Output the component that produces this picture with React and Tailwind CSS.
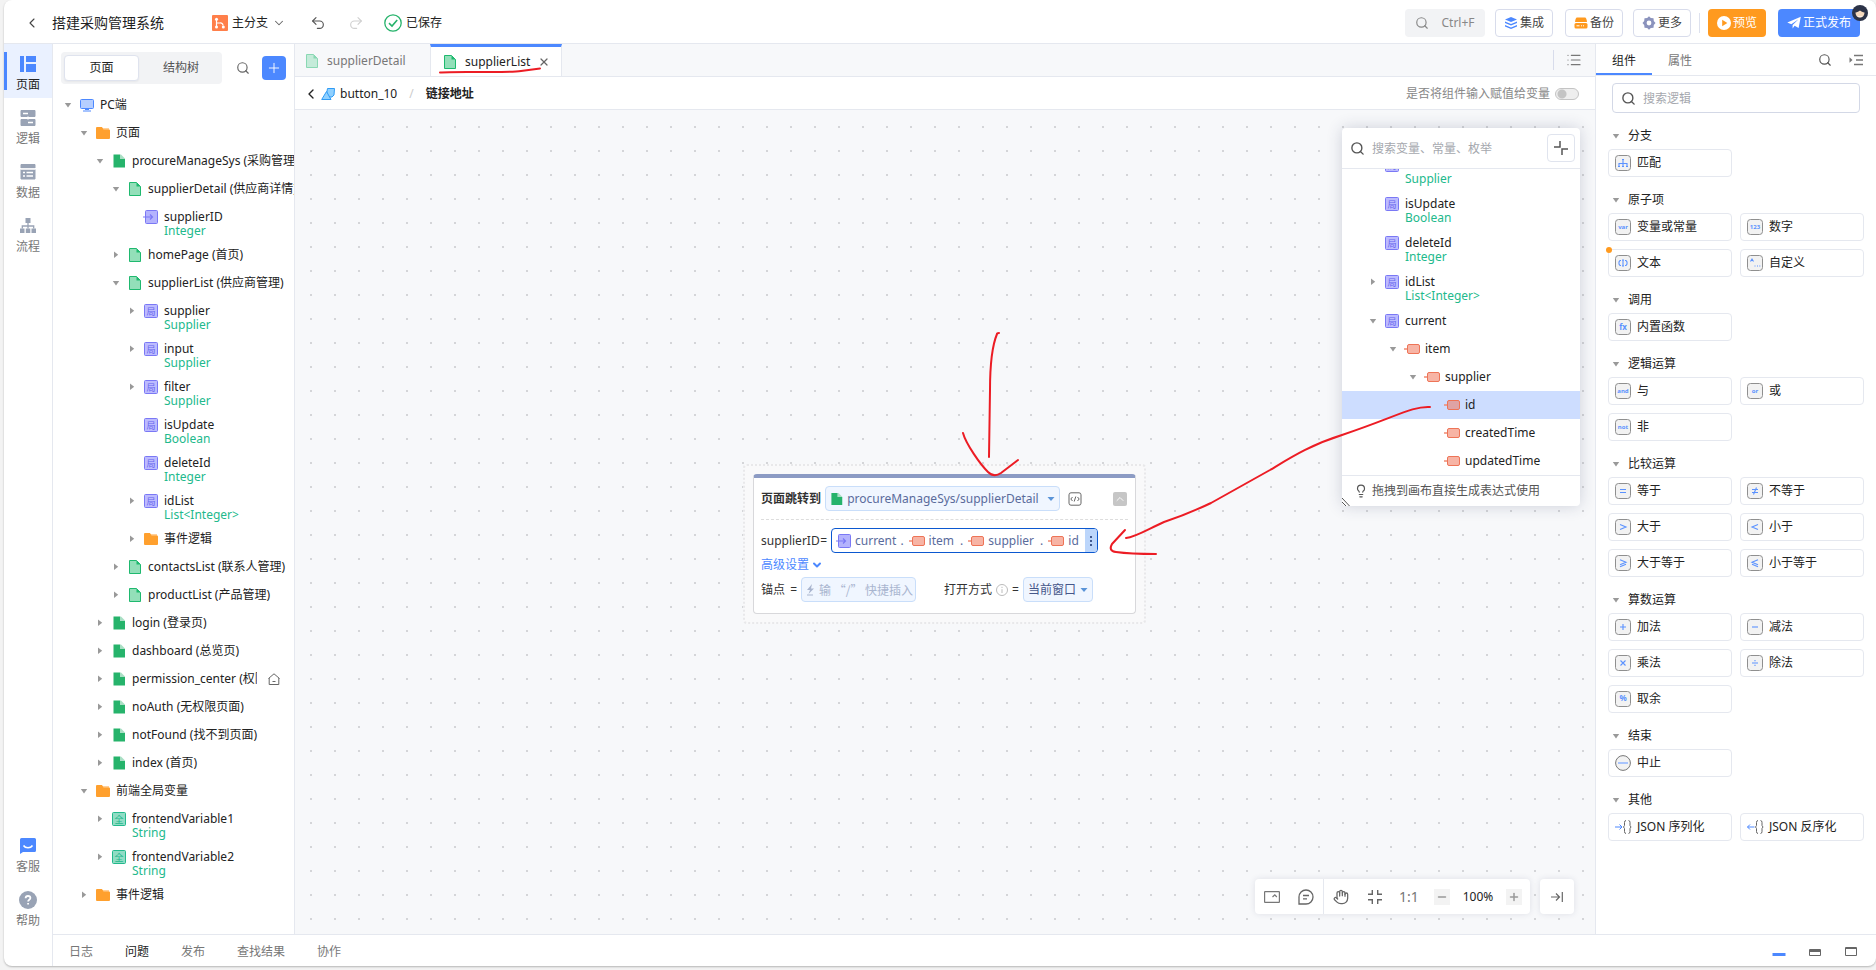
import clsx from 'clsx';
import { Search, Undo2, Redo2, ChevronDown, ChevronLeft, ChevronUp, Hand, Lightbulb, List, Plus, Minus, X } from 'lucide-react';

const TREE = [
  { level: 0, open: true, icon: 'pc', name: 'PC端' },
  { level: 1, open: true, icon: 'folder', name: '页面' },
  { level: 2, open: true, icon: 'page', name: 'procureManageSys (采购管理系统)' },
  { level: 3, open: true, icon: 'view', name: 'supplierDetail (供应商详情)' },
  { level: 4, icon: 'param', name: 'supplierID', type: 'Integer' },
  { level: 3, open: false, icon: 'view', name: 'homePage (首页)' },
  { level: 3, open: true, icon: 'view', name: 'supplierList (供应商管理)' },
  { level: 4, open: false, icon: 'local', name: 'supplier', type: 'Supplier' },
  { level: 4, open: false, icon: 'local', name: 'input', type: 'Supplier' },
  { level: 4, open: false, icon: 'local', name: 'filter', type: 'Supplier' },
  { level: 4, icon: 'local', name: 'isUpdate', type: 'Boolean' },
  { level: 4, icon: 'local', name: 'deleteId', type: 'Integer' },
  { level: 4, open: false, icon: 'local', name: 'idList', type: 'List<Integer>' },
  { level: 4, open: false, icon: 'folder', name: '事件逻辑' },
  { level: 3, open: false, icon: 'view', name: 'contactsList (联系人管理)' },
  { level: 3, open: false, icon: 'view', name: 'productList (产品管理)' },
  { level: 2, open: false, icon: 'page', name: 'login (登录页)' },
  { level: 2, open: false, icon: 'page', name: 'dashboard (总览页)' },
  { level: 2, open: false, icon: 'page', name: 'permission_center (权限中心)', home: true },
  { level: 2, open: false, icon: 'page', name: 'noAuth (无权限页面)' },
  { level: 2, open: false, icon: 'page', name: 'notFound (找不到页面)' },
  { level: 2, open: false, icon: 'page', name: 'index (首页)' },
  { level: 1, open: true, icon: 'folder', name: '前端全局变量' },
  { level: 2, open: false, icon: 'global', name: 'frontendVariable1', type: 'String' },
  { level: 2, open: false, icon: 'global', name: 'frontendVariable2', type: 'String' },
  { level: 1, open: false, icon: 'folder', name: '事件逻辑' },
];

const VARIABLES = [
  { level: 0, open: false, icon: 'local', name: 'filter', type: 'Supplier' },
  { level: 0, icon: 'local', name: 'isUpdate', type: 'Boolean' },
  { level: 0, icon: 'local', name: 'deleteId', type: 'Integer' },
  { level: 0, open: false, icon: 'local', name: 'idList', type: 'List<Integer>' },
  { level: 0, open: true, icon: 'local', name: 'current' },
  { level: 1, open: true, icon: 'field', name: 'item' },
  { level: 2, open: true, icon: 'field', name: 'supplier' },
  { level: 3, icon: 'field', name: 'id', selected: true },
  { level: 3, icon: 'field', name: 'createdTime' },
  { level: 3, icon: 'field', name: 'updatedTime' },
];

const SECTIONS = [
  { title: '分支', items: [{ glyph: 'tree', label: '匹配' }] },
  {
    title: '原子项',
    items: [
      { glyph: 'var', label: '变量或常量' },
      { glyph: '123', label: '数字' },
      { glyph: 'text', label: '文本', dot: true },
      { glyph: 'custom', label: '自定义' },
    ],
  },
  { title: '调用', items: [{ glyph: 'fx', label: '内置函数' }] },
  {
    title: '逻辑运算',
    items: [
      { glyph: 'and', label: '与' },
      { glyph: 'or', label: '或' },
      { glyph: 'not', label: '非' },
    ],
  },
  {
    title: '比较运算',
    items: [
      { glyph: '=', label: '等于' },
      { glyph: '≠', label: '不等于' },
      { glyph: '>', label: '大于' },
      { glyph: '<', label: '小于' },
      { glyph: '≥', label: '大于等于' },
      { glyph: '≤', label: '小于等于' },
    ],
  },
  {
    title: '算数运算',
    items: [
      { glyph: '+', label: '加法' },
      { glyph: '−', label: '减法' },
      { glyph: '×', label: '乘法' },
      { glyph: '÷', label: '除法' },
      { glyph: '%', label: '取余' },
    ],
  },
  { title: '结束', items: [{ glyph: 'stop', label: '中止' }] },
  {
    title: '其他',
    items: [
      { glyph: 'encode', label: 'JSON 序列化' },
      { glyph: 'decode', label: 'JSON 反序化' },
    ],
  },
];

export default function App() {
  return (
    <div className="h-screen min-h-[720px] bg-[#f3f3f3] pl-1 pb-1 font-['Noto_Sans','Noto_Sans_CJK_SC',sans-serif] text-xs text-[#222]">
      <div className="flex h-full flex-col overflow-hidden rounded-lg bg-white shadow-[0_1px_2px_rgba(0,0,0,0.25)]">
        <Header />
        <div className="flex min-h-0 flex-1">
          <Rail />
          <div className="flex min-w-0 flex-1 flex-col">
            <div className="flex min-h-0 flex-1">
              <Sidebar />
              <Editor />
              <ComponentPanel />
            </div>
            <Footer />
          </div>
        </div>
      </div>
    </div>
  );
}

function Header() {
  return (
    <header className="flex h-11 shrink-0 items-center border-b border-[#e5e8ef] pt-0.5 pr-4 pl-5">
      <button aria-label="返回" className="mr-3 text-[#444]">
        <ChevronLeft className="h-4 w-4" strokeWidth={1.6} />
      </button>
      <h1 className="mr-12 text-sm">搭建采购管理系统</h1>
      <button className="flex items-center gap-1">
        <svg className="h-4 w-4" viewBox="0 0 16 16" fill="none">
          <rect width="16" height="16" rx="1" fill="#ff7f4a" />
          <path d="M4.5 5v7M4.5 8H8a2.5 2.5 0 0 1 3 2.5" stroke="#fff" strokeWidth="1.2" />
          <circle cx="4.5" cy="4.2" r="1.5" fill="#fff" />
          <circle cx="4.5" cy="12" r="1.5" fill="#fff" />
          <circle cx="11.3" cy="12" r="1.5" fill="#fff" />
        </svg>
        主分支
        <ChevronDown className="h-3.5 w-3.5 text-[#666]" strokeWidth={1.8} />
      </button>
      <button aria-label="撤销" className="ml-6 text-[#555]">
        <Undo2 className="h-4 w-4" strokeWidth={1.7} />
      </button>
      <button aria-label="重做" className="ml-[22px] text-[#d0d0d0]">
        <Redo2 className="h-4 w-4" strokeWidth={1.7} />
      </button>
      <div className="ml-5 flex items-center gap-1">
        <svg className="h-[18px] w-[18px]" viewBox="0 0 18 18" fill="none" stroke="#26b36b" strokeWidth="1.3">
          <circle cx="9" cy="9" r="8.2" />
          <path d="M5 9.2 8 12l5.2-6" strokeWidth="1.6" />
        </svg>
        已保存
      </div>

      <div className="ml-auto flex h-7 items-center text-[#444]">
        <button className="flex h-7 w-20 items-center justify-center gap-3 rounded bg-[#f2f3f5] text-[#888]">
          <Search className="h-3.5 w-3.5" strokeWidth={2} />
          Ctrl+F
        </button>
        <button className="ml-2.5 flex h-7 w-[58px] items-center justify-center gap-0.5 rounded border border-[#d8dceb]">
          <svg className="h-3.5 w-3.5" viewBox="0 0 14 14" fill="#4c88ff">
            <path d="M7 1 13 3.5 7 6 1 3.5z" />
            <path d="M1 5.5 7 8l6-2.5v1.6L7 9.6 1 7.1zM1 9l6 2.5L13 9v1.6L7 13.1l-6-2.5z" />
          </svg>
          集成
        </button>
        <button className="ml-3 flex h-7 w-[58px] items-center justify-center gap-0.5 rounded border border-[#d8dceb]">
          <svg className="h-3.5 w-3.5" viewBox="0 0 14 14" fill="#ff9a1f">
            <path d="M3 1.5h8q1.500 0 2 4.500H1q.5-4.500 2-4.500z" />
            <rect x="0.5" y="7" width="13" height="5.5" rx="1.5" />
            <path d="M2.5 9.8h3M7 9.8h1M9 9.8h1" stroke="#fff" />
          </svg>
          备份
        </button>
        <button className="ml-2.5 flex h-7 w-[58px] items-center justify-center gap-0.5 rounded border border-[#d8dceb]">
          <svg className="h-3.5 w-3.5" viewBox="0 0 14 14">
            <path d="M7 .3 8.8 2l2.700.200.3 2.700L13.500 7l-1.700 2.100-.3 2.700-2.700.2L7 13.700 5.200 12l-2.700-.2-.3-2.700L.5 7l1.700-2.100.3-2.700L5.200 2z" fill="#8b93bd" />
            <circle cx="7" cy="7" r="2.4" fill="#fff" />
          </svg>
          更多
        </button>
        <span className="mx-2 h-5 w-px bg-[#dde1ee]" />
        <button className="flex h-7 w-[58px] items-center justify-center gap-0.5 rounded bg-[#ff9a1f] text-white">
          <svg className="h-3.5 w-3.5" viewBox="0 0 14 14">
            <circle cx="7" cy="7" r="7" fill="#fff" />
            <path d="M5.2 3.8 10.3 7l-5.1 3.2z" fill="#ff9a1f" />
          </svg>
          预览
        </button>
        <button className="relative ml-3 flex h-7 w-[82px] items-center justify-center gap-0.5 rounded bg-[#4c88ff] text-white">
          <svg className="h-3.5 w-3.5" viewBox="0 0 14 14" fill="#fff">
            <path d="M13.8.8 11.600 12 7.6 9.8 5.6 12.6V8.900L11.5 3.300 4.300 8.200.3 6.600z" />
          </svg>
          正式发布
          <svg className="absolute -top-1 -right-2 h-4 w-4" viewBox="0 0 16 16">
            <circle cx="8" cy="8" r="8" fill="#2c3348" />
            <path d="M3.500 7.500c2-.2 3-1 4.500-2 1.500 1 2.500 1.800 4.500 2 0 3-2 5-4.500 5s-4.500-2-4.500-5z" fill="#f5d9bd" />
            <path d="M5 10.800c1.500.9 4.500.9 6 0-.8 1.800-5.200 1.800-6 0z" fill="#fff" />
          </svg>
        </button>
      </div>
    </header>
  );
}

function Rail() {
  return (
    <nav className="flex w-[49px] shrink-0 flex-col border-r border-[#e5e8ef] pb-8">
      <RailItem label="页面" active>
        <path d="M0 0h4v16H0zM6 0h10v6H6zM6 8h10v8H6z" fill="#4c88ff" />
      </RailItem>
      <RailItem label="逻辑">
        <path d="M1 .5h14v6H1zM1 9.5h14v6H1z" fill="#99a3b5" stroke="#99a3b5" strokeLinejoin="round" />
        <path d="M3 3.5h5M8 12.5h5M8 6.5v3" stroke="#fff" strokeWidth="1.3" />
      </RailItem>
      <RailItem label="数据">
        <path d="M1 .5h14V4H1zM1 5.5h14V15H1z" fill="#99a3b5" stroke="#99a3b5" strokeLinejoin="round" />
        <path d="M1 5h14M3 8.5h2M6.5 8.5H13M3 12h2M6.5 12H13" stroke="#fff" strokeWidth="1.3" />
      </RailItem>
      <RailItem label="流程">
        <path d="M5.5 0h5v5h-5zM0 10.5h4.5V15H0zM5.8 10.5h4.5V15H5.8zM11.5 10.5H16V15h-4.5z" fill="#99a3b5" />
        <path d="M8 5v5.5M2.3 10.5V8h11.4v2.5" stroke="#99a3b5" strokeWidth="1.3" fill="none" />
      </RailItem>
      <div className="mt-auto">
        <RailItem label="客服">
          <path d="M1.5 0h13A1.5 1.5 0 0 1 16 1.5v11a1.5 1.5 0 0 1-1.5 1.5H3l-3 2V1.5A1.5 1.5 0 0 1 1.5 0z" fill="#4c88ff" />
          <path d="M3.5 7.5c2 3 7 3 9 0" stroke="#fff" strokeWidth="1.6" fill="none" />
        </RailItem>
        <RailItem label="帮助">
          <circle cx="8" cy="8" r="9" fill="#99a3b5" />
          <path d="M5.6 6.300A2.400 2.400 0 0 1 8 4c1.400 0 2.400.9 2.400 2.100 0 1.700-2.300 1.700-2.300 3.400M8.100 10.900v1.700" stroke="#fff" strokeWidth="1.8" fill="none" />
        </RailItem>
      </div>
    </nav>
  );
}

function RailItem({ label, active, children }) {
  return (
    <button
      className={clsx(
        'relative flex h-[54px] w-full flex-col items-center gap-[5px] pt-3 leading-4',
        active ? 'bg-[#eaf1ff] text-[#222]' : 'text-[#777]'
      )}
    >
      {active && <span className="absolute top-2 left-0 h-[38px] w-[3px] bg-[#4c88ff]" />}
      <svg className="h-4 w-4 overflow-visible" viewBox="0 0 16 16">
        {children}
      </svg>
      {label}
    </button>
  );
}

function Sidebar() {
  return (
    <aside className="flex w-[242px] shrink-0 flex-col overflow-hidden border-r border-[#e5e8ef]">
      <div className="flex items-center px-2 pt-2">
        <div className="flex h-8 w-[161px] items-center rounded bg-[#f2f3f5] px-[3px]">
          <button className="h-[26px] w-[75px] rounded border border-[#dfe3ee] bg-white shadow-xs">页面</button>
          <button className="flex-1 pl-1 text-[#555]">结构树</button>
        </div>
        <button aria-label="搜索" className="ml-[14px] text-[#666]">
          <Search className="h-3.5 w-3.5" strokeWidth={2} />
        </button>
        <button aria-label="新增" className="ml-3 flex h-6 w-6 items-center justify-center rounded bg-[#4c88ff] text-white">
          <Plus className="h-4 w-4" strokeWidth={1.4} />
        </button>
      </div>
      <ul className="mt-[7px] flex-1 overflow-hidden pl-2.5">
        {TREE.map((node, i) => (
          <TreeRow key={i} node={node} step={16} className={node.type ? 'h-[38px]' : 'h-7'} />
        ))}
      </ul>
    </aside>
  );
}

function TreeRow({ node, step, className }) {
  return (
    <li
      className={clsx('flex items-start whitespace-nowrap', node.selected && 'bg-[#cdddff]', className)}
      style={{ paddingLeft: node.level * step }}
    >
      <span className="flex h-7 w-[17px] shrink-0 items-center pl-px">
        {node.open !== undefined && <Caret open={node.open} />}
      </span>
      <span className="flex h-7 w-5 shrink-0 items-center">
        <NodeIcon kind={node.icon} />
      </span>
      <span className={clsx('pt-[7px] leading-[14px]', node.home && 'w-[125px] shrink-0 overflow-hidden')}>
        {node.name}
        {node.type && <span className="block text-[#22b98c]">{node.type}</span>}
      </span>
      {node.home && (
        <button aria-label="首页" className="ml-[11px] flex h-7 shrink-0 items-center gap-3.5">
          <svg className="h-3 w-3" viewBox="0 0 12 12" fill="none" stroke="#666">
            <path d="M.5 5.500 6 .8l5.500 4.700M1.200 5v6.500h9.600V5M4.500 8.500h3" />
          </svg>
          <svg className="h-3 w-1" viewBox="0 0 4 12" fill="#555">
            <path d="M0 2h2v2H0zM0 5h2v2H0zM0 8h2v2H0z" />
          </svg>
        </button>
      )}
    </li>
  );
}

function Caret({ open }) {
  return (
    <svg className="h-2 w-2" viewBox="0 0 8 8" fill="#999">
      {open ? <path d="M.8 2h6.400L4 6.500z" /> : <path d="M2 .5V7l4.200-3.200z" />}
    </svg>
  );
}

function NodeIcon({ kind }) {
  if (kind === 'pc') {
    return (
      <svg className="h-3.5 w-3.5" viewBox="0 0 14 14" stroke="#4c88ff">
        <rect x="0.5" y="1.5" width="13" height="9" rx="1" fill="#b5ceff" />
        <path d="M3 13h8M5 11.5h4" />
      </svg>
    );
  }
  if (kind === 'folder') {
    return (
      <svg className="h-3.5 w-3.5" viewBox="0 0 14 14">
        <path d="M6 2h7v4H6z" fill="#ffd09a" />
        <path d="M1 1h5l1.500 2.500H13a1 1 0 0 1 1 1V12a1 1 0 0 1-1 1H1a1 1 0 0 1-1-1V2a1 1 0 0 1 1-1z" fill="#ffa02e" />
      </svg>
    );
  }
  if (kind === 'page') {
    return (
      <svg className="h-3.5 w-3.5" viewBox="0 0 14 14">
        <path d="M8 .5h1l4 4v1H8z" fill="#a9dfc4" />
        <path d="M1.500.5H8V5h5v8.500H1.500z" fill="#26b36b" />
      </svg>
    );
  }
  if (kind === 'view') {
    return (
      <svg className="h-3.5 w-3.5" viewBox="0 0 14 14">
        <path d="M1.500.5h7l4 4v9h-11z" fill="#93dfb9" stroke="#1fb96f" />
        <path d="M8.500.5v4h4z" fill="#1fb96f" />
      </svg>
    );
  }
  if (kind === 'param') {
    return (
      <svg className="h-3.5 w-3.5 overflow-visible" viewBox="0 0 14 14" fill="none" stroke="#7a78f5">
        <rect x="1.5" y="0.5" width="12" height="13" rx="1" fill="#b4b3fd" />
        <path d="M-1 7h9M6 4.500 8.500 7 6 9.500" strokeWidth="1.2" />
      </svg>
    );
  }
  if (kind === 'field') {
    return (
      <svg className="h-3.5 w-4 -ml-px" viewBox="0 0 16 14">
        <path d="M0 7h4" stroke="#f08a70" strokeWidth="1.5" />
        <rect x="3.5" y="2.5" width="12" height="9" rx="1.5" fill="#ef6a4b" fillOpacity="0.5" stroke="#ee7457" />
      </svg>
    );
  }
  const global = kind === 'global';
  return (
    <svg className="h-3.5 w-3.5" viewBox="0 0 14 14">
      <rect x="0.5" y="0.5" width="13" height="13" rx="1" fill={global ? '#90dcc4' : '#bcbbfe'} stroke={global ? '#22b98c' : '#7a78f5'} />
      <text x="7" y="10.500" fontSize="9" textAnchor="middle" fill={global ? '#22b98c' : '#6664ee'}>
        {global ? '全' : '局'}
      </text>
    </svg>
  );
}

function Editor() {
  return (
    <main className="flex min-w-0 flex-1 flex-col">
      <div className="flex h-[33px] shrink-0 border-b border-[#e5e8ef] bg-[#f7f8fa]">
        <button className="flex w-[135px] items-center gap-2 pt-0.5 pl-[10px] text-[#777]">
          <span className="opacity-50">
            <NodeIcon kind="view" />
          </span>
          supplierDetail
        </button>
        <div className="relative flex w-[132px] items-center border-x border-t-[3px] border-x-[#e5e8ef] border-t-[#4c88ff] bg-white pl-3">
          <button className="flex items-center gap-2">
            <NodeIcon kind="view" />
            supplierList
          </button>
          <button aria-label="关闭" className="ml-2 text-[#666]">
            <X className="h-3 w-3" strokeWidth={2.5} />
          </button>
          <svg className="absolute top-5 left-2 h-2 w-[104px]" viewBox="0 0 104 8" fill="none" stroke="#ec1c24" strokeWidth="2" strokeLinecap="round">
            <path d="M1 5.500C10 4.500 40 5 52 5 70 5 76 5 82 4L101 1.500" />
          </svg>
        </div>
        <div className="my-1.5 mr-[13px] ml-auto flex items-center border-l border-[#d8dceb] pl-3 text-[#777]">
          <button aria-label="标签列表">
            <List className="h-4 w-4" strokeWidth={1.8} />
          </button>
        </div>
      </div>

      <div className="flex h-[33px] shrink-0 items-center border-b border-[#e5e8ef] pt-0.5 pr-4 pl-2">
        <button aria-label="返回上级">
          <ChevronLeft className="h-4 w-4" strokeWidth={2} />
        </button>
        <a href="#button_10" className="ml-0.5 flex items-center gap-[5px]">
          <svg className="h-3.5 w-3.5" viewBox="0 0 14 14" stroke="#2f9bf5" strokeLinejoin="round">
            <path d="M6.500 1.500h7L13 8l-2 2H5z" fill="#8fd0ff" />
            <path d="M5.500 4.500 10 12.500H.7z" fill="#8fd0ff" />
          </svg>
          button_10
        </a>
        <span className="mx-3 text-[#ccc]">/</span>
        <span className="font-bold">链接地址</span>
        <label className="ml-auto flex items-center gap-[5px] text-[#888]">
          是否将组件输入赋值给变量
          <input
            type="checkbox"
            role="switch"
            className="h-3 w-6 appearance-none rounded-full border border-[#c4c4c4] bg-[#eee] bg-[radial-gradient(circle_at_6px_5px,#c4c4c4_4px,transparent_5px)]"
          />
        </label>
      </div>

      <div className="relative flex-1 overflow-hidden bg-[#f7f8fa] bg-[linear-gradient(90deg,transparent_2px,#f7f8fa_2px),linear-gradient(#d4d5d8_2px,transparent_2px)] bg-size-[24px_24px] bg-position-[15px_16px]">
        <JumpCard />
        <VariablePanel />
        <CanvasToolbar />
        {/* hand-drawn arrows */}
        <svg className="pointer-events-none absolute top-0 left-0 h-[480px] w-[1200px]" viewBox="295 110 1200 480" fill="none" stroke="#ec1c24" strokeWidth="2" strokeLinecap="round" strokeLinejoin="round">
          <path d="M999 333q-2 0-2 1C992 346 990 366 990 390L989 457" />
          <path d="M963 433C966 444 980 464 988 472Q994 478 1001 473L1018 460" />
          <path d="M1430 407C1412 406 1396 417 1342 435 1310 445 1290 458 1270 470L1211 503C1190 513 1176 518 1164 522 1150 528 1136 537 1126 538" />
          <path d="M1125 530 1112 544Q1108 551 1116 552C1130 554 1142 554 1156 554" />
        </svg>
      </div>
    </main>
  );
}

function JumpCard() {
  return (
    <section className="absolute top-[354px] left-[448px] rounded border-2 border-dotted border-[#e8e8ea] bg-[#f9f9fa] p-2">
      <div className="h-[140px] w-[383px] rounded border border-t-4 border-[#d8d8db] border-t-[#8c9bc4] bg-white px-[7px] text-[#333]">
        <div className="flex h-[42px] items-center border-b border-dashed border-[#ddd]">
          <label htmlFor="target" className="mr-1 font-bold">
            页面跳转到
          </label>
          <div className="relative flex h-[25px] w-[235px] items-center rounded border border-[#c9defa] bg-[#f0f6ff] pl-1">
            <NodeIcon kind="page" />
            <select id="target" className="h-full w-full appearance-none pl-1 text-[#5a6b9c]">
              <option>procureManageSys/supplierDetail</option>
            </select>
            <SelectArrow />
          </div>
          <button aria-label="查看代码" className="ml-2">
            <svg className="h-3.5 w-3.5" viewBox="0 0 14 14" fill="none" stroke="#666">
              <rect x="1" y="0.8" width="12" height="12.4" rx="2" />
              <path d="M4.500 5 2.800 7l1.700 2M9.500 5l1.700 2-1.700 2M7.800 4.500l-1.600 5" />
            </svg>
          </button>
          <button aria-label="收起" className="mr-px ml-auto flex h-3.5 w-3.5 items-center justify-center rounded-xs bg-[#c6c6c6] text-white">
            <ChevronUp className="h-3 w-3" strokeWidth={1.8} />
          </button>
        </div>

        <div className="mt-2 flex h-[25px] items-center">
          <span className="mr-1 flex w-[66px] shrink-0 justify-between">
            supplierID <span>=</span>
          </span>
          <div className="flex h-[25px] w-[267px] items-center overflow-hidden rounded border border-[#0b58d0] text-[#5a6b9c]">
            <span className="ml-[5px] flex items-center gap-1">
              <NodeIcon kind="param" />
              current
            </span>
            <span className="ml-1">.</span>
            <FieldChip name="item" />
            <span className="ml-1.5">.</span>
            <FieldChip name="supplier" />
            <span className="ml-1.5">.</span>
            <FieldChip name="id" />
            <button aria-label="更多操作" className="ml-auto flex h-full w-3 items-center justify-center bg-[#bcd6fb]">
              <svg className="h-3 w-1" viewBox="0 0 4 12" fill="#41598f">
                <path d="M1 1h2v2H1zM1 5h2v2H1zM1 9h2v2H1z" />
              </svg>
            </button>
          </div>
        </div>

        <button className="mt-[3px] flex h-[18px] items-center gap-0.5 text-[#4c88ff]">
          高级设置
          <ChevronDown className="h-3 w-3" strokeWidth={4} />
        </button>

        <div className="mt-[3px] flex h-[25px] items-center">
          <label htmlFor="anchor" className="mr-1 flex w-9 justify-between whitespace-nowrap">
            锚点 <span>=</span>
          </label>
          <div className="flex h-[25px] w-[115px] items-center gap-0.5 rounded border border-[#c9defa] bg-[#f0f6ff] pl-[3px]">
            <svg className="h-3 w-3 shrink-0" viewBox="0 0 12 12" fill="#a9b5cf">
              <path d="M7 0 2 6h3L3.500 10 9 4.500H6zM2 10.500h6v1H2z" />
            </svg>
            <input
              id="anchor"
              placeholder="输 “/” 快捷插入"
              className="w-full min-w-0 font-['Noto_Sans_CJK_SC',sans-serif] placeholder-[#a9b5cf] outline-none"
            />
          </div>
          <label htmlFor="open-mode" className="ml-7 flex items-center gap-1">
            打开方式
            <svg className="h-3 w-3" viewBox="0 0 12 12" fill="none" stroke="#bbb">
              <circle cx="6" cy="6" r="5.5" />
              <path d="M6 2.800v1.200M6 5.200V9" />
            </svg>
            =
          </label>
          <div className="relative ml-1 h-[25px] w-[70px] rounded border border-[#c9defa] bg-[#f0f6ff]">
            <select id="open-mode" className="h-full w-full appearance-none pl-1 text-[#46578a]">
              <option>当前窗口</option>
            </select>
            <SelectArrow />
          </div>
        </div>
      </div>
    </section>
  );
}

function FieldChip({ name }) {
  return (
    <span className="ml-1.5 flex items-center gap-1">
      <NodeIcon kind="field" />
      {name}
    </span>
  );
}

function SelectArrow() {
  return (
    <svg className="pointer-events-none absolute top-2 right-1 h-2 w-2" viewBox="0 0 8 8" fill="#5a94d8">
      <path d="M.5 2h7L4 6z" />
    </svg>
  );
}

function VariablePanel() {
  return (
    <section className="absolute top-[18px] right-[15px] w-[238px] rounded bg-white shadow-[0_0_16px_rgba(40,50,90,0.2)]">
      <div className="flex h-[41px] items-center border-b border-[#e5e8ef] pr-[5px] pl-2">
        <Search className="h-[15px] w-[15px] shrink-0 text-[#555]" strokeWidth={2.2} />
        <input aria-label="搜索变量" placeholder="搜索变量、常量、枚举" className="w-full min-w-0 pt-0.5 pl-[7px] placeholder-[#a5a8ae] outline-none" />
        <button aria-label="收缩" className="flex h-7 w-7 shrink-0 items-center justify-center rounded border border-[#e0e4ee]">
          <svg className="h-3.5 w-3.5" viewBox="0 0 14 14" fill="none" stroke="#555" strokeWidth="1.5">
            <path d="M0 6h6V0M14 8H8v6" />
          </svg>
        </button>
      </div>
      <ul className="flex h-[306px] flex-col justify-end overflow-hidden">
        {VARIABLES.map((node, i) => (
          <TreeRow key={i} node={{ ...node, level: node.level + 1.3 }} step={20} className={node.type ? 'h-[39px] shrink-0' : 'h-7 shrink-0'} />
        ))}
      </ul>
      <div className="flex h-[31px] items-center gap-1 border-t border-[#e5e8ef] pl-3 text-[#555]">
        <Lightbulb className="h-3.5 w-3.5" strokeWidth={2} />
        拖拽到画布直接生成表达式使用
      </div>
      <svg className="absolute bottom-0 left-0 h-2 w-2" viewBox="0 0 8 8" stroke="#555" fill="none">
        <path d="M0 0l7.500 8M0 4l4 4" />
      </svg>
    </section>
  );
}

function CanvasToolbar() {
  return (
    <div className="absolute right-[21px] bottom-5 flex gap-2.5 text-[#666]">
      <div className="flex h-[35px] w-[275px] items-center rounded bg-white shadow-[0_0_6px_rgba(40,50,90,0.12)]">
        <div className="flex h-full w-[69px] items-center justify-around border-r border-[#e5e8ef]">
          <button aria-label="小地图">
            <svg className="h-4 w-4" viewBox="0 0 16 16" fill="none" stroke="#777" strokeWidth="1.2">
              <rect x="0.6" y="2.6" width="14.8" height="10.8" rx="0.5" />
              <path d="M8.500 8 10.800 5.800 12.800 8" />
            </svg>
          </button>
          <button aria-label="评论">
            <svg className="h-4 w-4" viewBox="0 0 16 16" fill="none" stroke="#666" strokeWidth="1.3">
              <path d="M1 15V8a7 7 0 1 1 7 7zM5 6.500h6M5 9.800h4" />
            </svg>
          </button>
        </div>
        <div className="flex flex-1 items-center pr-2 pl-[9px]">
          <button aria-label="拖动">
            <Hand className="h-4 w-4" strokeWidth={1.9} />
          </button>
          <button aria-label="适应画布" className="ml-[18px]">
            <svg className="h-4 w-4" viewBox="0 0 16 16" fill="none" stroke="#666" strokeWidth="1.4">
              <path d="M1 5.300h4.300V1M10.700 1v4.300H15M15 10.700h-4.300V15M5.300 15v-4.300H1" />
            </svg>
          </button>
          <button className="ml-4 w-5 text-center text-sm text-[#777]">1:1</button>
          <button aria-label="缩小" className="ml-[15px] flex h-4 w-4 items-center justify-center bg-[#f3f3f3] text-[#999]">
            <Minus className="h-3 w-3" strokeWidth={3} />
          </button>
          <span className="mx-auto text-[#222]">100%</span>
          <button aria-label="放大" className="flex h-4 w-4 items-center justify-center bg-[#f3f3f3] text-[#999]">
            <Plus className="h-3 w-3" strokeWidth={3} />
          </button>
        </div>
      </div>
      <button aria-label="收起工具" className="flex h-[35px] w-[34px] items-center justify-center rounded bg-white shadow-[0_0_6px_rgba(40,50,90,0.12)]">
        <svg className="h-3 w-3" viewBox="0 0 12 12" fill="none" stroke="#666" strokeWidth="1.2">
          <path d="M0 6h8M5 2.500 8.500 6 5 9.500M11.300 1v10" />
        </svg>
      </button>
    </div>
  );
}

function ComponentPanel() {
  return (
    <aside className="w-[281px] shrink-0 overflow-hidden border-l border-[#e5e8ef]">
      <div className="flex h-8 items-stretch border-b border-[#e5e8ef] pr-3">
        <button className="w-14 border-b-2 border-[#4c88ff] pt-1">组件</button>
        <button className="w-14 pt-0.5 text-[#777]">属性</button>
        <button aria-label="搜索" className="ml-auto text-[#555]">
          <Search className="h-3.5 w-3.5" strokeWidth={2} />
        </button>
        <button aria-label="收起面板" className="ml-4">
          <svg className="h-4 w-4" viewBox="0 0 16 16" fill="none" stroke="#777" strokeWidth="1.4">
            <path d="M6 3.500h9M8 8h7M6 12.500h9" />
            <path d="M1.500 5.300v5.400L4.500 8z" fill="#777" stroke="none" />
          </svg>
        </button>
      </div>
      <div className="px-3 pt-[7px]">
        <label className="mx-1 flex h-[30px] items-center rounded border border-[#d3d8e6] pl-2">
          <Search className="h-[15px] w-[15px] shrink-0 text-[#555]" strokeWidth={2.2} />
          <input aria-label="搜索逻辑" placeholder="搜索逻辑" className="w-full min-w-0 pt-0.5 pl-[7px] placeholder-[#a5a8ae] outline-none" />
        </label>
        {SECTIONS.map((section) => (
          <section key={section.title} className="mt-2.5">
            <h2 className="flex h-[26px] items-center gap-2 pl-1">
              <span className="flex w-2 shrink-0">
                <Caret open />
              </span>
              {section.title}
            </h2>
            <div className="grid grid-cols-2 gap-2">
              {section.items.map((item) => (
                <button key={item.label} className="relative flex h-7 items-center gap-1.5 rounded border border-[#e5e8ef] pl-1.5 whitespace-nowrap">
                  {item.dot && <span className="absolute -top-[3px] -left-[3px] h-1.5 w-1.5 rounded-full bg-[#ff9a1f]" />}
                  <Glyph kind={item.glyph} />
                  {item.label}
                </button>
              ))}
            </div>
          </section>
        ))}
      </div>
    </aside>
  );
}

function Glyph({ kind }) {
  if (kind === 'encode' || kind === 'decode') {
    return (
      <svg className="h-4 w-4 shrink-0 overflow-visible" viewBox="0 0 16 16" fill="none" stroke="#666">
        <path d={kind === 'encode' ? 'M0 8h7M4.500 5.500 7 8l-2.500 2.500' : 'M7.500 8H.5M3 5.500.5 8 3 10.500'} stroke="#4c88ff" />
        <path d="M11 1.500q-1.500 0-1.500 2v3L8.500 8l1 1.500v3q0 2 1.500 2M13.500 1.500q1.500 0 1.500 2v3L16 8l-1 1.500v3q0 2-1.500 2" />
      </svg>
    );
  }
  if (kind === 'stop') {
    return (
      <svg className="h-4 w-4 shrink-0" viewBox="0 0 16 16">
        <circle cx="8" cy="8" r="7.4" fill="#f2f2f2" stroke="#777" />
        <path d="M3 8h10" stroke="#8fb4ff" strokeWidth="1.5" />
      </svg>
    );
  }
  return (
    <svg className="h-4 w-4 shrink-0" viewBox="0 0 16 16">
      <rect x="0.5" y="0.5" width="15" height="15" rx="3" fill="#f2f2f2" stroke="#8f8f8f" />
      <GlyphMark kind={kind} />
    </svg>
  );
}

const STROKES = {
  tree: 'M8 4.500V8M4 11V8.500h8V11M8 8v3M3 11.500h2M7 11.500h2M11 11.500h2M7 4.500h2',
  text: 'M6 5.500H5L4 7v2l1 1.500h1M10 5.500h1L12 7v2l-1 1.500h-1M8 5v6M7 5h2M7 11h2',
  custom: 'M3.500 6.500 5 4l1.500 2.500M7.500 11h1M10 11h1M12.300 11h1',
  '=': 'M5 6.500h6M5 9.500h6',
  '≠': 'M5 6.500h6M5 9.500h6M9.500 4.500l-3 7',
  '>': 'M5 5.500 11 8l-6 2.500',
  '<': 'M11 5.500 5 8l6 2.500',
  '≥': 'M5 4.800 11 7.300 5 9.800M5 11.800l6-2.500',
  '≤': 'M11 4.800 5 7.300l6 2.500M11 11.800 5 9.300',
  '+': 'M8 5v6M5 8h6',
  '−': 'M5 8h6',
  '×': 'M5.500 5.500l5 5M10.500 5.500l-5 5',
  '÷': 'M5 8h6M8 5v1.200M8 9.800V11',
};

function GlyphMark({ kind }) {
  if (STROKES[kind]) {
    return <path d={STROKES[kind]} fill="none" stroke="#5b92ff" strokeWidth="1.1" />;
  }
  return (
    <text x="8" y={kind === 'fx' ? 11 : 10} fontSize={kind === 'fx' || kind === '%' ? 8 : 6} fontWeight="700" textAnchor="middle" fill="#5b92ff">
      {kind}
    </text>
  );
}

function Footer() {
  return (
    <footer className="flex h-8 shrink-0 items-center gap-8 border-t border-[#e5e8ef] px-4 pt-0.5 text-[#777]">
      <button>日志</button>
      <button className="text-[#222]">问题</button>
      <button>发布</button>
      <button>查找结果</button>
      <button>协作</button>
      <div className="ml-auto flex items-center gap-[22px] pr-0.5">
        <button aria-label="最小化">
          <svg className="h-3.5 w-3.5" viewBox="0 0 14 14">
            <path d="M.5 8h13v3H.5z" fill="#4c88ff" />
          </svg>
        </button>
        <button aria-label="半屏">
          <svg className="h-3.5 w-3.5" viewBox="0 0 14 14" fill="none" stroke="#666">
            <path d="M1.500 4.500h11v6h-11zM1 5.500h12M1 6.500h12" />
          </svg>
        </button>
        <button aria-label="最大化">
          <svg className="h-3.5 w-3.5" viewBox="0 0 14 14" fill="none" stroke="#666">
            <path d="M1.500 2.500h11v8h-11zM1 3.500h12" />
          </svg>
        </button>
      </div>
    </footer>
  );
}
